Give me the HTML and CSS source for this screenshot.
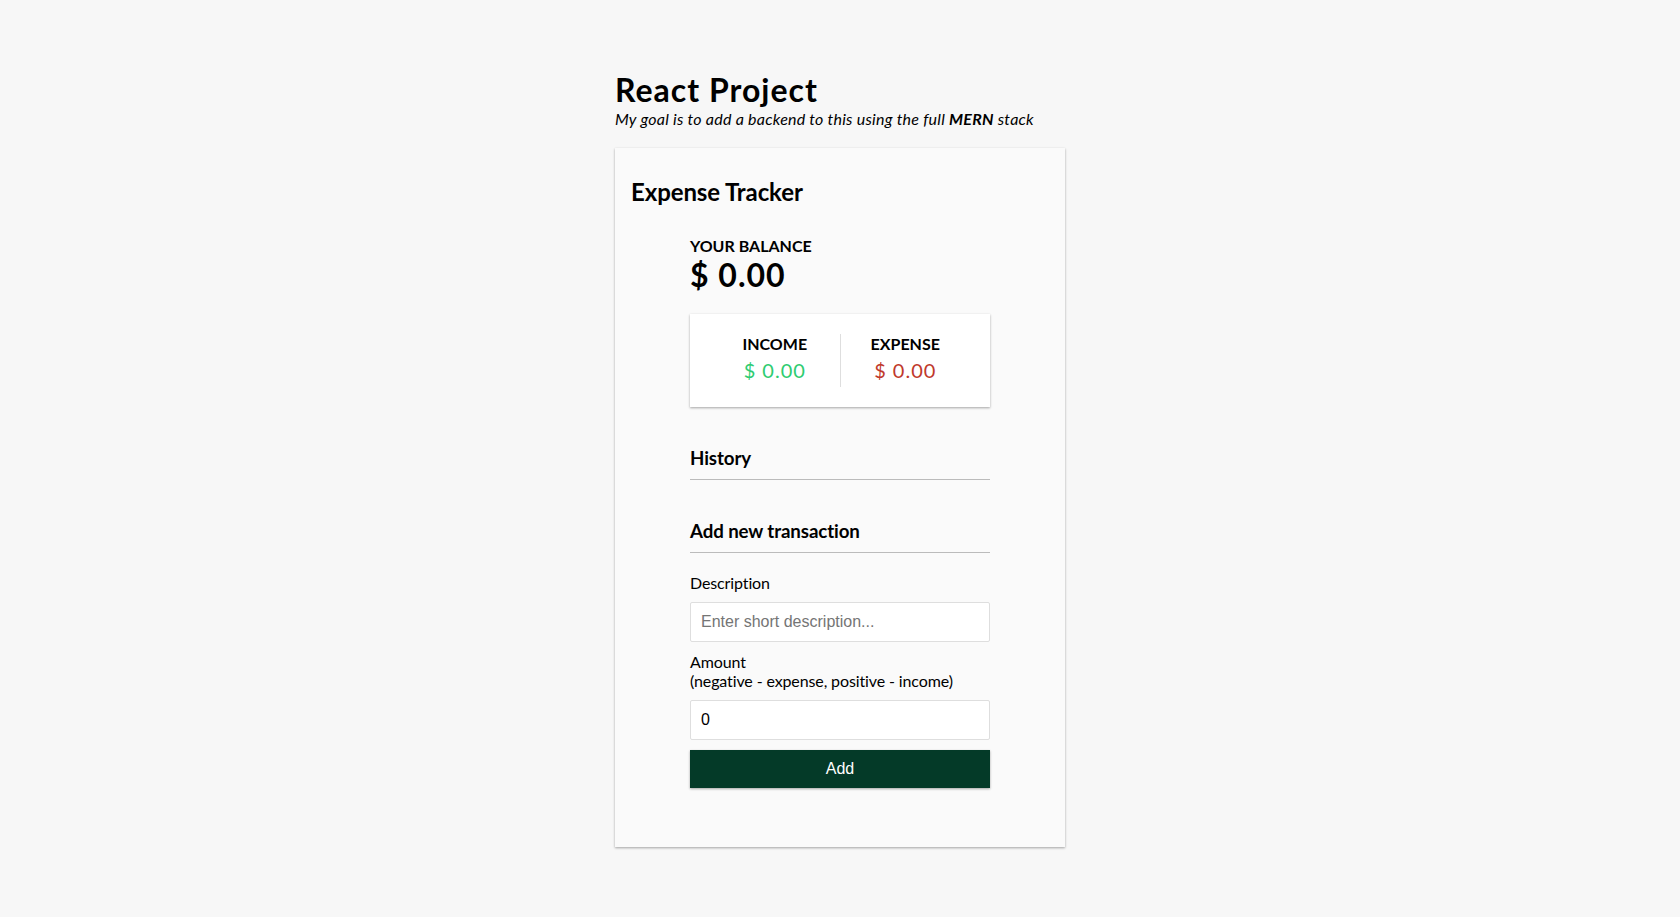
FILE: index.html
```html
<!DOCTYPE html>
<html lang="en">
<head>
<meta charset="utf-8">
<title>React Project</title>
<link rel="stylesheet" href="styles.css">
</head>
<body>
  <div class="page">
    <header class="page-header">
      <h1 class="title">React Project</h1>
      <p class="subtitle">My goal is to add a backend to this using the full <b>MERN</b> stack</p>
    </header>
    <main class="card">
      <h2 class="app-title">Expense Tracker</h2>
      <div class="container">
        <h4 class="label-upper">Your Balance</h4>
        <h1 class="balance">$ 0.00</h1>
        <div class="inc-exp-container">
          <div class="inc-exp-item">
            <h4 class="label-upper">Income</h4>
            <p class="money plus">$ 0.00</p>
          </div>
          <div class="inc-exp-item">
            <h4 class="label-upper">Expense</h4>
            <p class="money minus">$ 0.00</p>
          </div>
        </div>
        <h3 class="section-title">History</h3>
        <ul class="list"></ul>
        <h3 class="section-title">Add new transaction</h3>
        <form class="form">
          <div class="form-control">
            <label class="field-label" for="text">Description</label>
            <input class="field-input" type="text" id="text" placeholder="Enter short description...">
          </div>
          <div class="form-control">
            <label class="field-label" for="amount">Amount <br>(negative - expense, positive - income)</label>
            <input class="field-input" type="number" id="amount" value="0">
          </div>
          <button class="btn" type="button">Add</button>
        </form>
      </div>
    </main>
  </div>
</body>
</html>
```

FILE: styles.css
```css
* {
  box-sizing: border-box;
}

body {
  margin: 0;
  min-height: 100vh;
  background-color: #f7f7f7;
  font-family: Lato, "Open Sans", sans-serif;
  color: #000;
  display: flex;
  flex-direction: column;
  align-items: center;
  justify-content: center;
}

.page {
  width: 450px;
  display: flex;
  flex-direction: column;
}

.page-header {
  margin-bottom: 20px;
}

.title {
  margin: 0;
  font-size: 32px;
  font-weight: 700;
  letter-spacing: 1px;
}

.subtitle {
  margin: 0;
  font-size: 16px;
  font-style: italic;
  letter-spacing: 0.25px;
}

.subtitle b {
  font-weight: 700;
}

.card {
  background-color: #fafafa;
  box-shadow: 0 1px 3px rgba(0, 0, 0, 0.12), 0 1px 2px rgba(0, 0, 0, 0.24);
  padding: 10px 16px 29px;
}

.app-title {
  font-size: 24px;
  font-weight: 700;
  margin: 19.9px 0;
  letter-spacing: -0.1px;
}

.container {
  width: 300px;
  margin: 30px auto;
}

.label-upper {
  margin: 0;
  font-size: 16px;
  font-weight: 700;
  text-transform: uppercase;
}

.balance {
  margin: 0;
  font-size: 32px;
  font-weight: 700;
  letter-spacing: 1px;
}

.inc-exp-container {
  background-color: #fff;
  box-shadow: 0 1px 3px rgba(0, 0, 0, 0.12), 0 1px 2px rgba(0, 0, 0, 0.24);
  padding: 20px;
  display: flex;
  justify-content: space-between;
  margin: 20px 0;
}

.inc-exp-item {
  flex: 1;
  text-align: center;
}

.inc-exp-item:first-child {
  border-right: 1px solid #dedede;
}

.money {
  font-size: 20px;
  letter-spacing: 1px;
  margin: 5px 0;
}

.money.plus {
  color: #2ecc71;
}

.money.minus {
  color: #c0392b;
}

.section-title {
  font-size: 18.72px;
  font-weight: 700;
  border-bottom: 1px solid #bbb;
  padding-bottom: 10px;
  margin: 40px 0 10px;
  letter-spacing: -0.1px;
}

.list {
  list-style-type: none;
  padding: 0;
  margin: 16px 0;
}

.form {
  margin: 0;
}

.field-label {
  display: inline-block;
  margin: 10px 0;
  font-size: 16px;
  letter-spacing: -0.12px;
}

.field-input {
  display: block;
  width: 100%;
  border: 1px solid #dedede;
  border-radius: 2px;
  font-family: "Liberation Sans", Arial, sans-serif;
  font-size: 16px;
  padding: 10px;
  background: #fff;
  color: #000;
}

.field-input::placeholder {
  color: #757575;
}

.field-input[type="number"]::-webkit-inner-spin-button,
.field-input[type="number"]::-webkit-outer-spin-button {
  -webkit-appearance: none;
  margin: 0;
}

.btn {
  cursor: pointer;
  background-color: #043a28;
  box-shadow: 0 1px 3px rgba(0, 0, 0, 0.12), 0 1px 2px rgba(0, 0, 0, 0.24);
  color: #fff;
  border: 0;
  display: block;
  font-family: "Liberation Sans", Arial, sans-serif;
  font-size: 16px;
  margin: 10px 0 30px;
  padding: 10px;
  width: 100%;
}
```
